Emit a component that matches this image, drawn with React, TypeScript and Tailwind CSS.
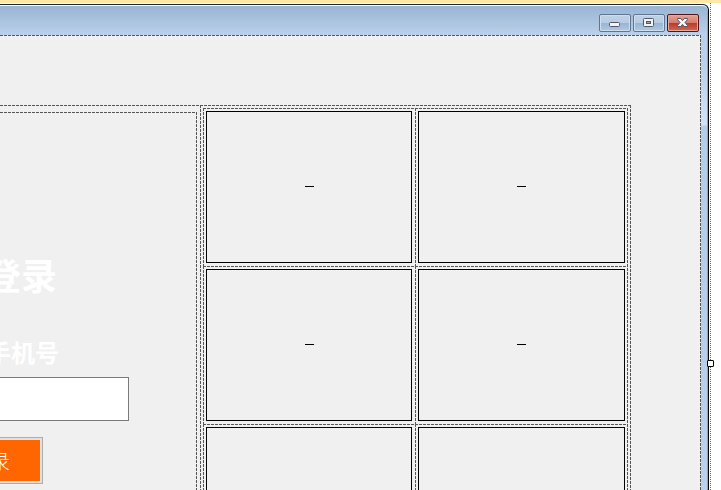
const PROJECTS = [1, 2, 3, 4, 5, 6];

// 1px designer guide lines: 3px dash, 1px gap
const GUIDE_TOP_LEFT =
  '[background:repeating-linear-gradient(90deg,#555_0_3px,transparent_3px_4px)_0_0/100%_1px_no-repeat,repeating-linear-gradient(180deg,#555_0_3px,transparent_3px_4px)_0_0/1px_100%_no-repeat]';
const GUIDE_TOP_RIGHT =
  '[background:repeating-linear-gradient(90deg,#555_0_3px,transparent_3px_4px)_0_0/100%_1px_no-repeat,repeating-linear-gradient(180deg,#555_0_3px,transparent_3px_4px)_100%_0/1px_100%_no-repeat]';
const GUIDE_LEFT =
  '[background:repeating-linear-gradient(180deg,#555_0_3px,transparent_3px_4px)_0_0/1px_100%_no-repeat]';
const GUIDE_RIGHT =
  '[background:repeating-linear-gradient(180deg,#555_0_3px,transparent_3px_4px)_100%_0/1px_100%_no-repeat]';

function CaptionButtons() {
  const base = 'flex h-[18px] w-8 justify-center rounded-[2px] border';
  const glass =
    'border-[#5f7590] bg-[linear-gradient(#bfd2e6_0%,#b7cce3_48%,#98b5d4_50%,#b0c9e3_100%)] shadow-[inset_0_0_0_1px_#cfdeef]';
  return (
    <div className="flex gap-0.5">
      <button type="button" aria-label="最小化" className={`${base} items-end pb-1 ${glass}`}>
        <svg width="12" height="5" viewBox="0 0 12 5">
          <rect x="0.5" y="0.5" width="10" height="4" rx="1" fill="#f4f4f4" stroke="#535666" />
        </svg>
      </button>
      <button type="button" aria-label="最大化" className={`${base} items-center ${glass}`}>
        <svg width="12" height="10" viewBox="0 0 12 10">
          <rect x="0.5" y="0.5" width="10" height="8" rx="1" fill="#f4f4f4" stroke="#535666" />
          <rect x="3.5" y="3.5" width="4" height="2" fill="#8fb0d2" stroke="#535666" />
        </svg>
      </button>
      <button
        type="button"
        aria-label="关闭"
        className={`${base} items-center border-[#531318] bg-[linear-gradient(#e2a395_0%,#d27d6c_48%,#b93a27_50%,#d06951_100%)] shadow-[inset_0_0_0_1px_#e6a99b]`}
      >
        <svg width="12" height="10" viewBox="0 0 12 10">
          <path
            d="M.5.5h3.3L5.5 2.6 7.2.5h3.3v1L8 4.5l2.5 3v1H7.2L5.5 6.4 3.8 8.5H.5v-1L3 4.5.5 1.5z"
            fill="#f6f6f6"
            stroke="#535666"
          />
        </svg>
      </button>
    </div>
  );
}

function LoginPanel() {
  return (
    <div className={`mt-[7px] mr-[3px] flex flex-col items-end overflow-hidden ${GUIDE_TOP_RIGHT}`}>
      <h1 className="mt-[138px] mr-[140px] text-4xl leading-[48px] font-bold whitespace-nowrap text-white">登录</h1>
      <label
        htmlFor="phone"
        className="mt-9 mr-[138px] text-2xl leading-[36px] font-bold whitespace-nowrap text-white"
      >
        手机号
      </label>
      <input
        id="phone"
        type="text"
        className="mt-[7px] mr-[68px] h-11 w-60 shrink-0 border border-[#7a7a7a] bg-white px-2 outline-none"
      />
      <button
        type="button"
        className="mt-4 mr-[154px] h-[47px] w-40 shrink-0 border border-[#adadad] bg-[#e1e1e1] p-0.5"
      >
        <span className="flex h-full items-center justify-end bg-[#ff6600] pr-[30px] text-xl font-light text-white">
          登录
        </span>
      </button>
    </div>
  );
}

function ProjectGrid() {
  return (
    <div className={`pt-[3px] pr-0.5 pl-[3px] ${GUIDE_LEFT}`}>
      <div className={`grid grid-cols-2 pr-px ${GUIDE_RIGHT}`}>
        {PROJECTS.map(id => (
          <div key={id} className={`h-[158px] pt-[3px] pr-[3px] pb-[3px] pl-[3px] even:pr-0.5 ${GUIDE_TOP_LEFT}`}>
            <div className="flex h-full items-center justify-center border border-black pb-0.5">
              <span className="h-px w-[9px] bg-black" />
            </div>
          </div>
        ))}
      </div>
    </div>
  );
}

export default function App() {
  return (
    <div className="flex h-screen flex-col overflow-hidden bg-white font-['Noto_Sans_CJK_SC',sans-serif]">
      <div className="h-[3px] shrink-0 bg-[#ffe8a6]" />
      <div className="relative min-h-0 flex-1 pt-px pr-3">
        <div className="flex h-full flex-col rounded-tr-md border-t border-r border-t-[#1c2430] border-r-black bg-[linear-gradient(#99b4d1_0,#b9d1ea_30px,#b9d1ea_60px,#d3e3f5_120px,#b4cde8_121px,#b9d1ea_100%)] shadow-[inset_-1px_0_0_#3fc4e8]">
          <header className="flex h-[30px] shrink-0 items-start justify-end rounded-tr-md border-t border-white pt-2 pr-[9px]">
            <CaptionButtons />
          </header>
          <main className="mr-[7px] min-h-0 flex-1 overflow-hidden bg-[#f0f0f0]">
            <div className={`h-full pt-[70px] pr-[70px] ${GUIDE_TOP_RIGHT}`}>
              <div className={`grid h-full grid-cols-[200px_1fr] overflow-hidden pr-px ${GUIDE_TOP_RIGHT}`}>
                <LoginPanel />
                <ProjectGrid />
              </div>
            </div>
          </main>
        </div>
        {/* selection outline with its resize grip */}
        <div className="absolute top-0 right-[10px] h-full w-px bg-[repeating-linear-gradient(180deg,#666_0_1px,transparent_1px_2px)]" />
        <div className="absolute top-[357px] right-[7px] size-[7px] rounded-[1px] border border-black bg-white" />
      </div>
    </div>
  );
}
